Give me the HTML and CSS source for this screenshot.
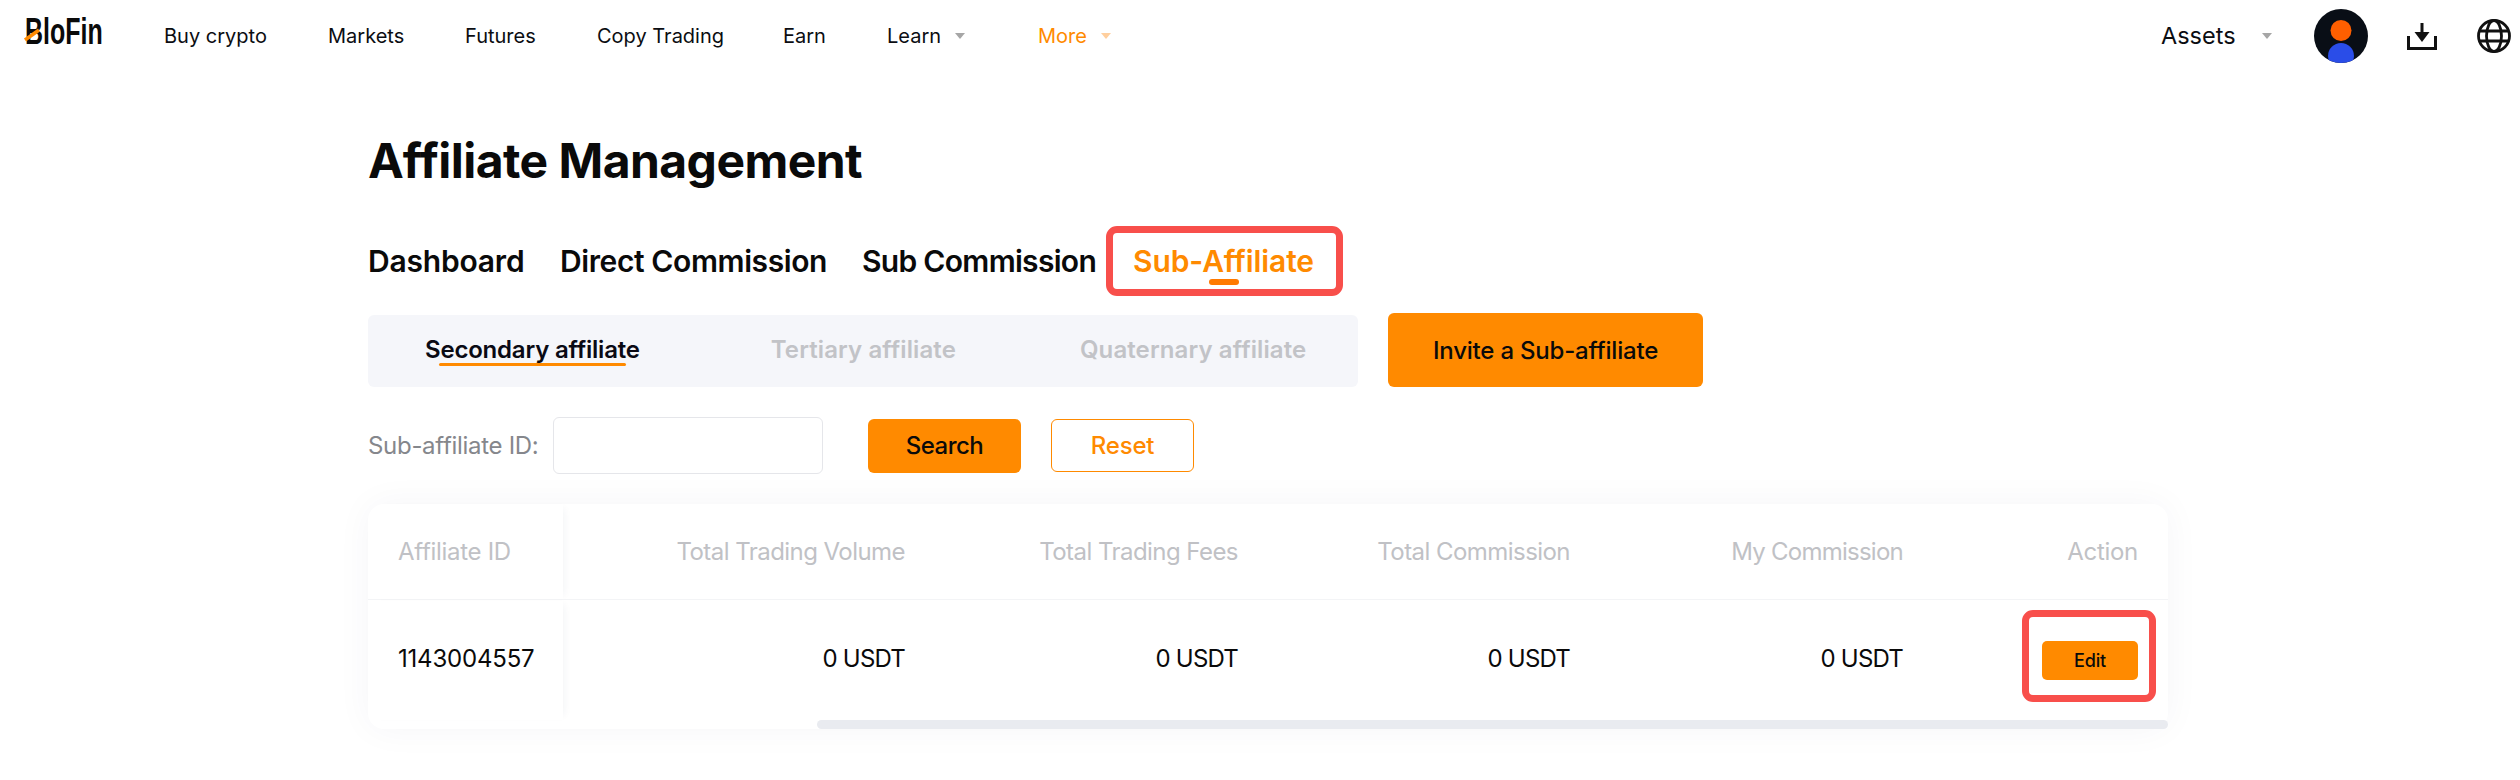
FILE: index.html
```html
<!DOCTYPE html>
<html lang="en">
<head>
<meta charset="utf-8">
<title>Affiliate Management</title>
<link rel="stylesheet" href="styles.css">
</head>
<body>
<header class="topbar">
  <a class="logo"><span class="logo-text">BloFin</span><svg class="logo-slash" viewBox="0 0 14 14"><path d="M0 13 L14 3" /></svg></a>
  <nav class="nav">
    <a class="nav-item nav-buy">Buy crypto</a>
    <a class="nav-item nav-markets">Markets</a>
    <a class="nav-item nav-futures">Futures</a>
    <a class="nav-item nav-copy">Copy Trading</a>
    <a class="nav-item nav-earn">Earn</a>
    <a class="nav-item nav-learn">Learn<i class="caret"></i></a>
    <a class="nav-item nav-more">More<i class="caret caret-light"></i></a>
  </nav>
  <div class="top-right">
    <a class="nav-item assets">Assets<i class="caret"></i></a>
    <svg class="avatar" viewBox="0 0 54 54">
      <defs><clipPath id="av"><circle cx="27" cy="27" r="27"/></clipPath></defs>
      <circle cx="27" cy="27" r="27" fill="#090e16"/>
      <g clip-path="url(#av)"><circle cx="27" cy="21.5" r="10.5" fill="#ff5f00"/><circle cx="27" cy="47" r="13" fill="#2a4de8"/></g>
    </svg>
    <svg class="icon-download" viewBox="0 0 30 27" fill="none" stroke="#111" stroke-width="3">
      <path d="M1.5 13 V25.5 H28.5 V13"/>
      <path d="M15 0 V10"/>
      <path d="M7.5 9 H22.5 L15 19 Z" fill="#111" stroke="none"/>
    </svg>
    <svg class="icon-globe" viewBox="0 0 34 34" fill="none" stroke="#111" stroke-width="2.8">
      <circle cx="17" cy="17" r="15.5"/>
      <ellipse cx="17" cy="17" rx="7.5" ry="15.5"/>
      <path d="M2 12 H32 M2 22 H32"/>
    </svg>
  </div>
</header>

<main class="content">
  <h1 class="title">Affiliate Management</h1>

  <div class="tabs">
    <a class="tab tab-dash">Dashboard</a>
    <a class="tab tab-direct">Direct Commission</a>
    <a class="tab tab-sub">Sub Commission</a>
    <a class="tab tab-active">Sub-Affiliate<span class="tab-mark"></span><span class="hl hl-tab"></span></a>
  </div>

  <div class="subbar">
    <div class="subtabs">
      <a class="subtab subtab-active">Secondary affiliate</a>
      <a class="subtab subtab-t">Tertiary affiliate</a>
      <a class="subtab subtab-q">Quaternary affiliate</a>
    </div>
    <button class="btn-invite">Invite a Sub-affiliate</button>
  </div>

  <form class="filter">
    <label class="filter-label">Sub-affiliate ID:</label>
    <input class="filter-input" type="text">
    <button class="btn-search" type="button">Search</button>
    <button class="btn-reset" type="button">Reset</button>
  </form>

  <section class="table-card">
    <div class="table">
      <div class="cell head first">Affiliate ID</div>
      <div class="cell head">Total Trading Volume</div>
      <div class="cell head">Total Trading Fees</div>
      <div class="cell head">Total Commission</div>
      <div class="cell head mycom">My Commission</div>
      <div class="cell head last">Action</div>
      <div class="cell body first">1143004557</div>
      <div class="cell body usdt">0 USDT</div>
      <div class="cell body usdt">0 USDT</div>
      <div class="cell body usdt">0 USDT</div>
      <div class="cell body usdt">0 USDT</div>
      <div class="cell body last action"><button class="btn-edit" type="button">Edit<span class="hl hl-edit"></span></button></div>
    </div>
    <div class="scrollbar"><div class="thumb"></div></div>
  </section>
</main>
</body>
</html>
```
FILE: styles.css
```css
* { box-sizing: border-box; }
html, body { margin: 0; padding: 0; background: #fff; }
body { font-family: Inter, "Noto Sans", sans-serif; color: #0b0d12; width: 2520px; height: 780px; overflow: hidden; }
a { color: inherit; text-decoration: none; }
button { font-family: inherit; border: 0; padding: 0; cursor: pointer; }

.topbar { display: flex; align-items: center; height: 72px; padding-left: 25px; padding-right: 9px; }
.logo { position: relative; display: block; width: 79px; height: 36px; margin-bottom: 8px; }
.logo-text { display: inline-block; font-family: "Liberation Sans", sans-serif; font-weight: 700; font-size: 37px; line-height: 36px; color: #0a0a0a; transform: scaleX(0.675); transform-origin: left center; }
.logo-slash { position: absolute; left: 0; top: 13px; width: 14px; height: 14px; fill: none; stroke: #ff8a00; stroke-width: 3.6; overflow: visible; }
.nav { display: flex; align-items: center; margin-left: 60px; }
.nav-item { display: inline-flex; align-items: center; font-size: 20px; line-height: 28px; white-space: nowrap; }
.nav-buy { width: 164px; }
.nav-markets { width: 137px; }
.nav-futures { width: 132px; }
.nav-copy { width: 186px; }
.nav-earn { width: 104px; }
.nav-learn { width: 151px; }
.nav-more { color: #ff8a00; }
.caret { display: inline-block; margin-left: 14px; width: 0; height: 0; border-left: 5px solid transparent; border-right: 5px solid transparent; border-top: 6px solid #a6a6a6; }
.caret-light { border-top-color: #ffcf9e; }
.top-right { margin-left: auto; display: flex; align-items: center; }
.assets { font-size: 23.5px; width: 153px; }
.assets .caret { margin-left: 26px; }
.avatar { width: 54px; height: 54px; }
.icon-download { width: 30px; height: 27px; margin-left: 39px; }
.icon-globe { width: 34px; height: 34px; margin-left: 40px; }

.content { width: 1800px; margin-left: 368px; }
.title { margin: 0; padding-top: 55px; font-size: 48px; line-height: 68px; font-weight: 700; letter-spacing: -0.55px; color: #0a0a0a; }

.tabs { display: flex; align-items: center; height: 70px; margin-top: 31px; }
.tab { position: relative; font-size: 30px; font-weight: 600; line-height: 40px; white-space: nowrap; color: #0a0a0a; }
.tab-dash { width: 192px; letter-spacing: -0.2px; }
.tab-direct { width: 302px; letter-spacing: -0.4px; }
.tab-sub { width: 271px; letter-spacing: -0.7px; }
.tab-active { color: #ff8a00; letter-spacing: -0.1px; }
.tab-mark { position: absolute; left: 76px; bottom: -4px; width: 30px; height: 6px; background: #ff7a00; border-radius: 3px; }

.hl { position: absolute; border: 7px solid #f84f4b; border-radius: 11px; pointer-events: none; }
.hl-tab { left: -27px; right: -29px; top: -15px; bottom: -15px; }

.subbar { display: flex; align-items: flex-end; margin-top: 17px; height: 74px; }
.subtabs { display: flex; align-items: center; width: 990px; height: 72px; padding-bottom: 3px; background: #f5f6fa; border-radius: 6px; }
.subtab { position: relative; font-size: 24px; font-weight: 600; line-height: 32px; letter-spacing: 0.1px; color: #c2c3c7; white-space: nowrap; }
.subtab-active { margin-left: 57px; color: #0a0a14; letter-spacing: -0.2px; }
.subtab-active::after { content: ""; position: absolute; left: 14px; right: 14px; bottom: 0; height: 3px; background: #ff8a00; border-radius: 2px; }
.subtab-t { margin-left: 131px; }
.subtab-q { margin-left: 124px; }
.btn-invite { margin-left: 30px; width: 315px; height: 74px; background: #ff8a00; border-radius: 6px; font-size: 24px; font-weight: 500; color: #0a0a0a; letter-spacing: -0.2px; }

.filter { display: flex; align-items: center; height: 57px; margin-top: 30px; }
.filter-label { font-size: 24px; letter-spacing: -0.3px; color: #85878c; white-space: nowrap; width: 185px; }
.filter-input { width: 270px; height: 57px; border: 1px solid #e5e6ea; border-radius: 6px; background: #fff; }
.btn-search { margin-left: 45px; width: 153px; height: 54px; background: #ff8a00; border-radius: 6px; font-size: 24px; font-weight: 500; color: #0a0a0a; letter-spacing: -0.5px; }
.btn-reset { margin-left: 30px; width: 143px; height: 53px; background: #fff; border: 1px solid #ff8a00; border-radius: 6px; font-size: 24px; font-weight: 500; color: #ff8a00; letter-spacing: -0.2px; }

.table-card { margin-top: 30px; background: #fff; border-radius: 16px; box-shadow: 0 0 36px rgba(40, 50, 90, 0.045); }
.table { display: grid; grid-template-columns: 195px 372px 333px 332px 333px 235px; grid-template-rows: 96px 120px; }
.cell { display: flex; align-items: center; justify-content: flex-end; padding-right: 30px; font-size: 24px; letter-spacing: -0.55px; white-space: nowrap; }
.head { color: #c0c1c5; border-bottom: 1px solid #f3f4f6; }
.head.first { border-top-left-radius: 16px; letter-spacing: -0.3px; }
.head.last { letter-spacing: -0.3px; }
.head.mycom { letter-spacing: -0.75px; }
.body { color: #0a0a0a; padding-bottom: 4px; }
.usdt { letter-spacing: -0.8px; }
.action { padding-bottom: 0; }
.first { justify-content: flex-start; padding-left: 30px; padding-right: 0; box-shadow: 6px 0 8px -5px rgba(40, 50, 90, 0.06); }
.body.first { letter-spacing: -0.2px; }
.last { padding-right: 30px; }
.btn-edit { position: relative; width: 96px; height: 39px; background: #ff8a00; border-radius: 5px; font-size: 18px; font-weight: 500; color: #0a0a0a; letter-spacing: -0.2px; }
.hl-edit { left: -20px; right: -18px; top: -31px; bottom: -22px; }
.scrollbar { height: 9px; display: flex; justify-content: flex-end; }
.thumb { width: 1351px; height: 9px; background: #e9ebf0; border-radius: 5px; }
```
